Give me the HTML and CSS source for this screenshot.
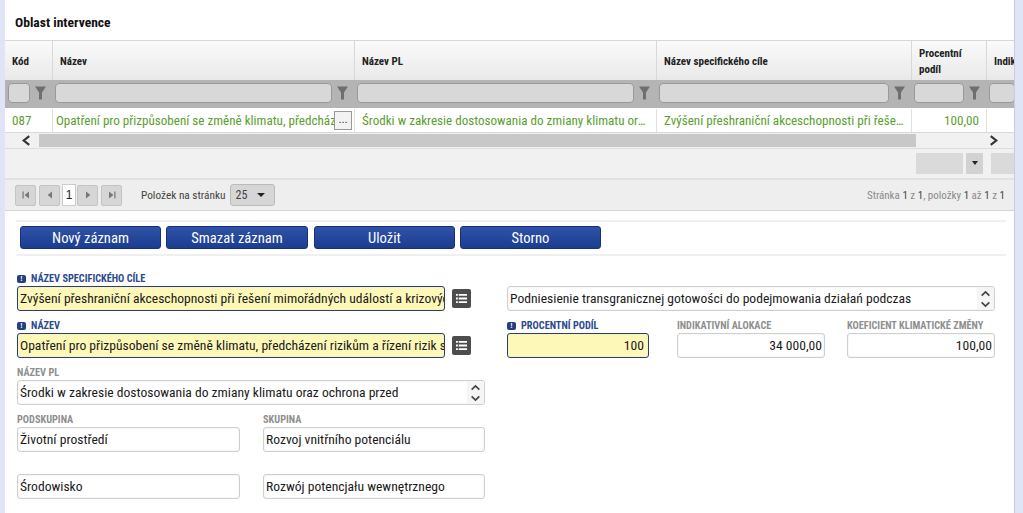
FILE: index.html
```html
<!DOCTYPE html>
<html lang="cs">
<head>
<meta charset="utf-8">
<title>Oblast intervence</title>
<link rel="stylesheet" href="styles.css">
</head>
<body>
<main class="page">
  <h2 class="title">Oblast intervence</h2>
  <section class="grid">
    <div class="row head">
      <div class="hc">Kód</div>
      <div class="hc">Název</div>
      <div class="hc">Název PL</div>
      <div class="hc">Název specifického cíle</div>
      <div class="hc">Procentní<br>podíl</div>
      <div class="hc">Indikativní</div>
    </div>
    <div class="row filter">
      <div class="fc"><span class="fi"></span><svg class="funnel" viewBox="0 0 12 14"><path d="M0 0h12L7.6 6.5V14H4.4V6.500z"/></svg></div>
      <div class="fc"><span class="fi"></span><svg class="funnel" viewBox="0 0 12 14"><path d="M0 0h12L7.6 6.5V14H4.4V6.500z"/></svg></div>
      <div class="fc"><span class="fi"></span><svg class="funnel" viewBox="0 0 12 14"><path d="M0 0h12L7.6 6.5V14H4.4V6.500z"/></svg></div>
      <div class="fc"><span class="fi"></span><svg class="funnel" viewBox="0 0 12 14"><path d="M0 0h12L7.6 6.5V14H4.4V6.500z"/></svg></div>
      <div class="fc"><span class="fi"></span><svg class="funnel" viewBox="0 0 12 14"><path d="M0 0h12L7.6 6.5V14H4.4V6.500z"/></svg></div>
      <div class="fc"><span class="fi"></span></div>
    </div>
    <div class="row data">
      <div class="dc code">087</div>
      <div class="dc more"><span class="clip">Opatření pro přizpůsobení se změně klimatu, předcházení rizikům a řízení rizik</span><button class="dots">...</button></div>
      <div class="dc pad"><span class="clip ell">Środki w zakresie dostosowania do zmiany klimatu oraz ochrona przed</span></div>
      <div class="dc pad"><span class="clip ell">Zvýšení přeshraniční akceschopnosti při řešení mimořádných událostí</span></div>
      <div class="dc num">100,00</div>
      <div class="dc"></div>
    </div>
    <div class="scroll">
      <div class="sbtn"><svg class="chev" viewBox="0 0 10 10"><path d="M7.5 1 2.5 5l5 4"/></svg></div>
      <div class="strack"></div>
      <div class="sbtn end"><svg class="chev" viewBox="0 0 10 10"><path d="M2.5 1 7.5 5l-5 4"/></svg></div>
    </div>
    <div class="band">
      <span class="bfield"></span>
      <span class="bcaret"><i class="caret small"></i></span>
      <span class="bfield last"></span>
    </div>
    <div class="pager">
      <div class="pbtns">
        <button class="pb gap"><svg viewBox="0 0 10 10"><path d="M1.5 1.500h1.200v7H1.500zM8 1.500v7L3.600 5z"/></svg></button>
        <button class="pb"><svg viewBox="0 0 10 10"><path d="M7 1.500v7L2.600 5z"/></svg></button>
        <span class="pcur">1</span>
        <button class="pb gap"><svg viewBox="0 0 10 10"><path d="M3 1.500v7L7.400 5z"/></svg></button>
        <button class="pb"><svg viewBox="0 0 10 10"><path d="M2 1.500v7L6.400 5zM7.300 1.500h1.200v7H7.300z"/></svg></button>
      </div>
      <span class="plabel">Položek na stránku</span>
      <div class="psel"><span>25</span><i class="caret"></i></div>
      <div class="pinfo">Stránka <b>1</b> z <b>1</b>, položky <b>1</b> až <b>1</b> z <b>1</b></div>
    </div>
  </section>

  <div class="toolbar">
    <button class="btn">Nový záznam</button>
    <button class="btn wide">Smazat záznam</button>
    <button class="btn">Uložit</button>
    <button class="btn">Storno</button>
  </div>

  <section class="form">
    <div class="col-left">
      <div class="field">
        <label class="lbl req"><i class="bang">!</i>NÁZEV SPECIFICKÉHO CÍLE</label>
        <div class="withicon">
          <div class="inp must clip-t">Zvýšení přeshraniční akceschopnosti při řešení mimořádných událostí a krizových situací</div>
          <span class="listbtn"><svg viewBox="0 0 12 12"><path d="M0 1h2v2H0zM3 1h9v2H3zM0 5h2v2H0zM3 5h9v2H3zM0 9h2v2H0zM3 9h9v2H3z"/></svg></span>
        </div>
      </div>
      <div class="field">
        <label class="lbl req"><i class="bang">!</i>NÁZEV</label>
        <div class="withicon">
          <div class="inp must clip-t">Opatření pro přizpůsobení se změně klimatu, předcházení rizikům a řízení rizik související</div>
          <span class="listbtn"><svg viewBox="0 0 12 12"><path d="M0 1h2v2H0zM3 1h9v2H3zM0 5h2v2H0zM3 5h9v2H3zM0 9h2v2H0zM3 9h9v2H3z"/></svg></span>
        </div>
      </div>
      <div class="field">
        <label class="lbl">NÁZEV PL</label>
        <div class="inp spin"><span>Środki w zakresie dostosowania do zmiany klimatu oraz ochrona przed</span>
          <span class="updown"><svg viewBox="0 0 10 18"><path d="M1.500 6 5 2.500 8.500 6M1.500 12 5 15.500 8.500 12"/></svg></span></div>
      </div>
      <div class="pair">
        <div class="field"><label class="lbl">PODSKUPINA</label><div class="inp">Životní prostředí</div></div>
        <div class="field"><label class="lbl">SKUPINA</label><div class="inp">Rozvoj vnitřního potenciálu</div></div>
      </div>
      <div class="pair">
        <div class="field"><label class="lbl">&nbsp;</label><div class="inp">Środowisko</div></div>
        <div class="field"><label class="lbl">&nbsp;</label><div class="inp">Rozwój potencjału wewnętrznego</div></div>
      </div>
    </div>
    <div class="col-right">
      <div class="field">
        <label class="lbl">&nbsp;</label>
        <div class="inp spin"><span>Podniesienie transgranicznej gotowości do podejmowania działań podczas</span>
          <span class="updown"><svg viewBox="0 0 10 18"><path d="M1.500 6 5 2.500 8.500 6M1.500 12 5 15.500 8.500 12"/></svg></span></div>
      </div>
      <div class="triple">
        <div class="field"><label class="lbl req"><i class="bang">!</i>PROCENTNÍ PODÍL</label><div class="inp must right">100</div></div>
        <div class="field"><label class="lbl">INDIKATIVNÍ ALOKACE</label><div class="inp right">34 000,00</div></div>
        <div class="field"><label class="lbl">KOEFICIENT KLIMATICKÉ ZMĚNY</label><div class="inp right">100,00</div></div>
      </div>
    </div>
  </section>
</main>
</body>
</html>
```
FILE: styles.css
```css
* { box-sizing: border-box; }
html, body { margin: 0; height: 513px; overflow: hidden; }
body {
  background: #dfe4f6;
  font-family: "Liberation Sans Narrow", "Roboto Condensed", Roboto, sans-serif;
  color: #1c1c1c;
}
.page {
  margin-left: 5px;
  width: 1010px;
  height: 513px;
  background: #fff;
  overflow: hidden;
  border-right: 1px solid #c9cdd8;
}
.title {
  margin: 0;
  height: 40px;
  padding: 14px 0 0 10px;
  font-size: 13.600px;
  line-height: 16px;
  font-weight: 700;
  color: #111;
}
.grid { border-top: 1px solid #d8d8d8; }
.row {
  display: grid;
  grid-template-columns: 47px 302px 302px 255px 75px 29px;
}
.head { height: 39px; }
.hc {
  display: flex;
  align-items: center;
  padding: 2px 0 0 7px;
  background: linear-gradient(#fafafa, #e9e9e9);
  border-left: 1px solid #d8d8d8;
  font-size: 11px;
  line-height: 16px;
  font-weight: 700;
  white-space: nowrap;
  overflow: hidden;
  color: #222;
}
.hc:first-child { border-left: 0; }
.filter { height: 28px; background: #b4b4b4; }
.fc {
  display: flex;
  align-items: center;
  gap: 5px;
  padding: 0 6px 3px 3px;
  overflow: hidden;
}
.fi {
  flex: 1 0 0;
  min-width: 21px;
  height: 20px;
  background: #d8d8d8;
  border: 1px solid #999;
  border-radius: 4px;
}
.fc:last-child { padding-right: 0; }
.funnel { flex: none; width: 11px; height: 14px; fill: #6e6e6e; }
.data {
  height: 25px;
  padding-top: 1px;
  border-bottom: 1px solid #d8d8d8;
  font-size: 13.100px;
  color: #5c9e2e;
}
.dc {
  display: flex;
  align-items: center;
  min-width: 0;
  border-left: 1px solid #e0e0e0;
}
.dc:first-child { border-left: 0; }
.code { padding-left: 7px; }
.more { padding: 0 2px 0 3px; gap: 0; }
.pad { padding: 0 6px 0 7px; }
.num { justify-content: flex-end; padding-right: 7px; }
.clip { flex: 1 1 0; min-width: 0; overflow: hidden; white-space: nowrap; }
.ell { text-overflow: ellipsis; }
.dots {
  flex: none;
  width: 18px;
  height: 19px;
  padding: 0 0 4px;
  background: #f2f2f2;
  border: 1px solid #999;
  font: 11px/12px "Liberation Sans", sans-serif;
  color: #333;
}
.scroll { display: flex; height: 16px; background: #f1f1f1; border-bottom: 1px solid #ddd; }
.sbtn { flex: 0 0 34px; display: flex; align-items: center; justify-content: center; padding-left: 8px; }
.sbtn.end { flex: 0 0 98px; justify-content: flex-end; padding: 0 15px 0 0; }
.strack { flex: 1; margin: 1px 0; background: #c8c8c8; }
.chev { width: 11px; height: 11px; fill: none; stroke: #333; stroke-width: 2; }
.band {
  display: flex;
  justify-content: flex-end;
  align-items: center;
  gap: 3px;
  height: 29px;
  padding-bottom: 1px;
  background: #f1f1f1;
  overflow: hidden;
}
.bfield { width: 47px; height: 21px; background: #dadada; }
.bcaret { display: flex; align-items: center; justify-content: center; width: 17px; height: 21px; background: #d2d2d2; }
.bfield.last { width: 23px; margin-left: 5px; }
.caret { display: block; border: 4px solid transparent; border-top-color: #222; border-bottom: 0; }
.caret.small { border-width: 4px 3px 0; }
.pager {
  display: flex;
  align-items: center;
  height: 33px;
  padding: 0 9px 0 10px;
  background: #eee;
  border-top: 2px solid #e2e2e2;
  border-bottom: 1px solid #d4d4d4;
  font-size: 11.300px;
  color: #444;
}
.pbtns { display: flex; align-items: center; }
.pb {
  display: flex;
  align-items: center;
  justify-content: center;
  width: 21px;
  height: 21px;
  padding: 0;
  background: #d6d6d6;
  border: 1px solid #c4c4c4;
  border-radius: 2px;
}
.pb svg { width: 10px; height: 10px; fill: #777; }
.pb.gap { margin-right: 3px; }
.pcur {
  width: 14px;
  height: 22px;
  margin: 0 1px 0 2px;
  background: #fff;
  border: 1px solid #ccc;
  text-align: center;
  font: 12px/20px "Liberation Sans", sans-serif;
  color: #222;
}
.plabel { margin-left: 19px; }
.psel {
  display: flex;
  align-items: center;
  justify-content: space-between;
  flex: none;
  width: 45px;
  height: 22px;
  margin-left: 4px;
  padding: 0 9px 0 5px;
  background: #d6d6d6;
  border: 1px solid #bbb;
  border-radius: 3px;
  font-size: 12px;
}
.pinfo { margin-left: auto; font-size: 11px; color: #8a8a8a; }
.pinfo b { font-weight: 400; color: #444; }
.toolbar {
  display: flex;
  gap: 5px;
  margin: 9px 8px 0 11px;
  padding: 4px 0 5px 4px;
  border-top: 2px solid #f0f0f0;
  border-bottom: 2px solid #f0f0f0;
}
.btn {
  width: 141px;
  height: 23px;
  padding: 0;
  background: linear-gradient(#2f52a8, #1c3d8f);
  border: 1px solid #16307a;
  border-radius: 3px;
  color: #fff;
  font: 14.600px/20px "Liberation Sans Narrow", "Roboto Condensed", Roboto, sans-serif;
}
.btn.wide { width: 142px; margin-right: 1px; }
.form {
  display: grid;
  grid-template-columns: 468px 488px;
  column-gap: 22px;
  padding: 15px 0 0 12px;
}
.col-left, .col-right { display: flex; flex-direction: column; gap: 7px; }
.field { display: flex; flex-direction: column; min-width: 0; }
.lbl {
  display: flex;
  align-items: center;
  height: 15px;
  font-size: 10.300px;
  line-height: 14px;
  font-weight: 700;
  color: #8f8f8f;
  white-space: nowrap;
}
.req { color: #2b4a8e; }
.bang {
  width: 9px;
  height: 8px;
  margin-right: 5px;
  background: #22407f;
  border-radius: 2px;
  color: #fff;
  font: 700 7px/8px "Liberation Sans", sans-serif;
  text-align: center;
}
.inp {
  height: 25px;
  padding: 0 2px;
  background: #fff;
  border: 1px solid #cfcfcf;
  border-radius: 3px;
  box-shadow: inset 0 0 2px #e4e4e4;
  font-size: 13.600px;
  line-height: 23px;
  white-space: nowrap;
  overflow: hidden;
  color: #1a1a1a;
}
.must { background: #fdf8b8; border-color: #2d3f66; }
.right { text-align: right; padding-right: 2px; }
.must.right { padding-right: 4px; }
.withicon { display: flex; align-items: center; gap: 7px; }
.withicon .inp { width: 428px; }
.listbtn {
  display: flex;
  align-items: center;
  justify-content: center;
  width: 19px;
  height: 19px;
  background: #4d4d4d;
  border-radius: 2px;
}
.listbtn svg { width: 11px; height: 11px; fill: #fff; }
.spin { display: flex; align-items: center; justify-content: space-between; padding-right: 0; }
.updown {
  display: flex;
  align-items: center;
  justify-content: center;
  flex: none;
  width: 17px;
  height: 23px;
  background: #f5f5f5;
}
.updown svg { width: 11px; height: 20px; fill: none; stroke: #444; stroke-width: 1.500; }
.pair { display: grid; grid-template-columns: 223px 222px; column-gap: 23px; }
.triple { display: grid; grid-template-columns: 170px 170px 148px; }
.triple .field:nth-child(1) { padding-right: 28px; }
.triple .field:nth-child(2) { padding-right: 22px; }
```
